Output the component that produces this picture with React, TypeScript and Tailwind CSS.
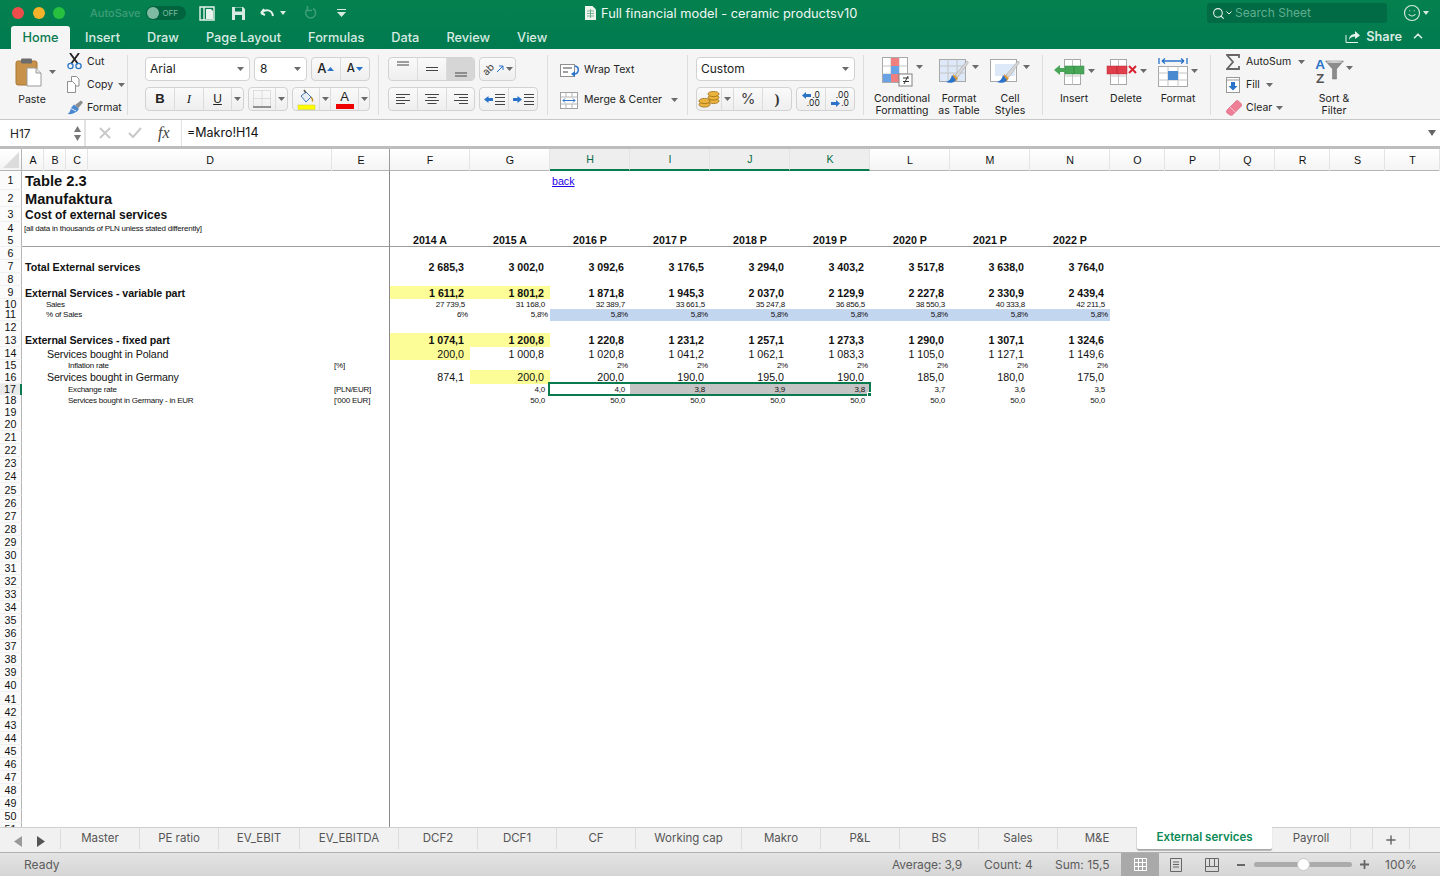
import { ChevronUp, Plus, Search, Smile } from 'lucide-react'
import type { ReactNode } from 'react'

const cols = 'grid grid-cols-[22px_22px_22px_22px_244px_58px_80px_80px_80px_80px_80px_80px_80px_80px_80px_55px_55px_55px_55px_55px_55px]'

const years = ['2014 A', '2015 A', '2016 P', '2017 P', '2018 P', '2019 P', '2020 P', '2021 P', '2022 P']

type Row = {
  n: number
  h: string
  label?: string
  labelCls?: string
  unit?: string
  vals?: string[]
  kind?: 'year' | 'bold' | 'reg' | 'small' | 'pct'
  fills?: Record<number, string>
}

const yellow = 'bg-[#fdfd98]'
const blue = 'bg-[#c3d6f0]'
const gray = 'bg-[#c4c4c4]'

const rows: Row[] = [
  { n: 1, h: 'h-[19px]', label: 'Table 2.3', labelCls: 'pl-[3px] text-[14.67px] font-bold' },
  { n: 2, h: 'h-[17px]', label: 'Manufaktura', labelCls: 'pl-[3px] text-[14.67px] font-bold' },
  { n: 3, h: 'h-[15px]', label: 'Cost of external services', labelCls: 'pl-[3px] text-[12px] font-bold' },
  { n: 4, h: 'h-[12px]', label: '[all data in thousands of PLN unless stated differently]', labelCls: 'pl-[2px] text-[8px] tracking-[-0.23px]' },
  { n: 5, h: 'h-[13px] border-b border-[#a0a0a0]', vals: years, kind: 'year' },
  { n: 6, h: 'h-[13px]' },
  { n: 7, h: 'h-[13px]', label: 'Total External services', labelCls: 'pl-[3px] text-[10.67px] font-bold', kind: 'bold',
    vals: ['2 685,3', '3 002,0', '3 092,6', '3 176,5', '3 294,0', '3 403,2', '3 517,8', '3 638,0', '3 764,0'] },
  { n: 8, h: 'h-[13px]' },
  { n: 9, h: 'h-[13px]', label: 'External Services - variable part', labelCls: 'pl-[3px] text-[10.67px] font-bold tracking-[-0.05px]', kind: 'bold',
    vals: ['1 611,2', '1 801,2', '1 871,8', '1 945,3', '2 037,0', '2 129,9', '2 227,8', '2 330,9', '2 439,4'],
    fills: { 0: yellow, 1: yellow } },
  { n: 10, h: 'h-[10px]', label: 'Sales', labelCls: 'pl-[24px] text-[8px] tracking-[-0.23px]', kind: 'small',
    vals: ['27 739,5', '31 168,0', '32 389,7', '33 661,5', '35 247,8', '36 856,5', '38 550,3', '40 333,8', '42 211,5'] },
  { n: 11, h: 'h-[12px]', label: '% of Sales', labelCls: 'pl-[24px] text-[8px] tracking-[-0.23px]', kind: 'pct',
    vals: ['6%', '5,8%', '5,8%', '5,8%', '5,8%', '5,8%', '5,8%', '5,8%', '5,8%'],
    fills: { 2: blue, 3: blue, 4: blue, 5: blue, 6: blue, 7: blue, 8: blue } },
  { n: 12, h: 'h-[12px]' },
  { n: 13, h: 'h-[14px]', label: 'External Services - fixed part', labelCls: 'pl-[3px] text-[10.67px] font-bold tracking-[-0.05px]', kind: 'bold',
    vals: ['1 074,1', '1 200,8', '1 220,8', '1 231,2', '1 257,1', '1 273,3', '1 290,0', '1 307,1', '1 324,6'],
    fills: { 0: yellow, 1: yellow } },
  { n: 14, h: 'h-[13px]', label: 'Services bought in Poland', labelCls: 'pl-[25px] text-[10.67px] tracking-[-0.1px]', kind: 'reg',
    vals: ['200,0', '1 000,8', '1 020,8', '1 041,2', '1 062,1', '1 083,3', '1 105,0', '1 127,1', '1 149,6'],
    fills: { 0: yellow } },
  { n: 15, h: 'h-[10px]', label: 'Inflation rate', labelCls: 'pl-[46px] text-[8px] tracking-[-0.23px]', unit: '[%]', kind: 'pct',
    vals: ['', '', '2%', '2%', '2%', '2%', '2%', '2%', '2%'] },
  { n: 16, h: 'h-[14px]', label: 'Services bought in Germany', labelCls: 'pl-[25px] text-[10.67px] tracking-[-0.1px]', kind: 'reg',
    vals: ['874,1', '200,0', '200,0', '190,0', '195,0', '190,0', '185,0', '180,0', '175,0'],
    fills: { 1: yellow } },
  { n: 17, h: 'h-[11px]', label: 'Exchange rate', labelCls: 'pl-[46px] text-[8px] tracking-[-0.23px]', unit: '[PLN/EUR]', kind: 'small',
    vals: ['', '4,0', '4,0', '3,8', '3,9', '3,8', '3,7', '3,6', '3,5'],
    fills: { 3: gray, 4: gray, 5: gray } },
  { n: 18, h: 'h-[11px]', label: 'Services bought in Germany - in EUR', labelCls: 'pl-[46px] text-[8px] tracking-[-0.23px]', unit: "['000 EUR]", kind: 'small',
    vals: ['', '50,0', '50,0', '50,0', '50,0', '50,0', '50,0', '50,0', '50,0'] },
  { n: 19, h: 'h-[12px]' },
]
for (let n = 20; n <= 51; n++) rows.push({ n, h: 'h-[13.07px]' })

const valueCls = {
  year: 'justify-center text-[10.67px] font-bold',
  bold: 'justify-end pr-[6px] pt-[1px] text-[10.67px] font-bold',
  reg: 'justify-end pr-[6px] pt-[1px] text-[10.67px]',
  small: 'justify-end pr-[5px] text-[8px] tracking-[-0.23px]',
  pct: 'justify-end pr-[2px] text-[8px] tracking-[-0.23px]',
}

const headers = ['A', 'B', 'C', 'D', 'E', 'F', 'G', 'H', 'I', 'J', 'K', 'L', 'M', 'N', 'O', 'P', 'Q', 'R', 'S', 'T']

const sheets = ['Master', 'PE ratio', 'EV_EBIT', 'EV_EBITDA', 'DCF2', 'DCF1', 'CF', 'Working cap', 'Makro', 'P&L', 'BS', 'Sales', 'M&E']

function Caret({ className = '' }: { className?: string }) {
  return (
    <svg width="7" height="4" viewBox="0 0 7 4" className={className}>
      <path d="M0 0h7L3.5 4z" fill="#6b6b6b" />
    </svg>
  )
}

function Seg({ children, className = '' }: { children: ReactNode; className?: string }) {
  return (
    <div className={`flex h-[24px] rounded-[4px] border border-[#d2d2d2] bg-gradient-to-b from-[#fafafa] to-[#efefef] ${className}`}>
      {children}
    </div>
  )
}

function SegBtn({ children, className = '' }: { children: ReactNode; className?: string }) {
  return <div className={`flex items-center justify-center border-r border-[#dcdcdc] last:border-r-0 ${className}`}>{children}</div>
}

function Sep() {
  return <div className="mt-[6px] h-[60px] w-px shrink-0 bg-[#dedede]" />
}

function Lines({ d }: { d: string }) {
  return (
    <svg width="16" height="14" viewBox="0 0 16 14">
      <path d={d} stroke="#444" strokeWidth="1" fill="none" />
    </svg>
  )
}

function IndentIcon({ flip }: { flip?: boolean }) {
  return (
    <svg width="21" height="13" viewBox="0 0 21 13">
      <path d={flip ? 'M9 6.500L4.500 3v2H0v3h4.500v2z' : 'M0 6.500L4.500 3v2H9v3H4.500v2z'} fill="#2a73c9" />
      <path d="M11 1.500h10M11 4.500h10M11 8.500h10M11 11.500h10" stroke="#444" />
    </svg>
  )
}

function SmallGrid({ children }: { children?: ReactNode }) {
  return (
    <g>
      <rect x="0.5" y="0.5" width="25" height="25" fill="#fff" stroke="#a8a8a8" />
      <path d="M9 .5v25M17 .5v25M.5 9h25M.5 17h25" stroke="#c4c4c4" />
      {children}
    </g>
  )
}

function PasteIcon() {
  return (
    <svg width="28" height="30" viewBox="0 0 28 30">
      <rect x="1" y="4" width="21" height="24" rx="2" fill="#c8924b" stroke="#a87733" />
      <rect x="6" y="1.5" width="11" height="5" rx="1.2" fill="#6d6d6d" />
      <path d="M12 11h9l5 5v13H12z" fill="#fff" stroke="#9a9a9a" />
      <path d="M21 11v5h5" fill="#e8e8e8" stroke="#9a9a9a" />
    </svg>
  )
}

function ScissorsIcon() {
  return (
    <svg width="16" height="17" viewBox="0 0 16 17">
      <path d="M3 0l8 11M12 0L4 11" stroke="#222" strokeWidth="1.8" />
      <circle cx="3.5" cy="13" r="2.6" fill="none" stroke="#2b76c9" strokeWidth="1.3" />
      <circle cx="11.5" cy="13" r="2.6" fill="none" stroke="#2b76c9" strokeWidth="1.3" />
    </svg>
  )
}

function CopyIcon() {
  return (
    <svg width="15" height="17" viewBox="0 0 15 17">
      <path d="M4.5.5h5l2.5 2.5v7H4.5z" fill="#fff" stroke="#8f8f8f" />
      <path d="M.5 5.5h5l3 3v8H.5z" fill="#fff" stroke="#8f8f8f" />
    </svg>
  )
}

function BrushIcon() {
  return (
    <svg width="17" height="15" viewBox="0 0 17 15">
      <path d="M8 5l6-4.5 2 2L11 8.5z" fill="#8d8d8d" />
      <path d="M7 4.5l5 4.5-2 2.5c-3 2-6 3-9.5 2.5 2.5-1.5 3-4 3.5-6z" fill="#4a88d0" />
      <path d="M3 8l6 3" stroke="#d8e6f6" />
    </svg>
  )
}

function FillIcon() {
  return (
    <svg width="19" height="21" viewBox="0 0 19 21">
      <path d="M4 7l5-4 5 5-5 5z" fill="#e9eef5" stroke="#3f78bd" />
      <path d="M7 1l2 3" stroke="#555" strokeWidth="1.5" />
      <path d="M14 8c1.5 1.5 2 3 1.5 4.5" stroke="#b88a2a" strokeWidth="1.5" fill="none" />
      <rect x="1" y="16" width="17" height="4.5" fill="#fdfd00" stroke="#c9c93a" strokeWidth=".5" />
    </svg>
  )
}

function CoinsIcon() {
  return (
    <svg width="22" height="17" viewBox="0 0 22 17">
      <g fill="#e9b33d" stroke="#9a6c14" strokeWidth=".8">
        <ellipse cx="15.5" cy="10" rx="5.5" ry="2.6" />
        <ellipse cx="15.5" cy="6.5" rx="5.5" ry="2.6" />
        <ellipse cx="15.5" cy="3" rx="5.5" ry="2.6" />
        <ellipse cx="6.5" cy="13.5" rx="5.5" ry="2.6" />
        <ellipse cx="6.5" cy="10" rx="5.5" ry="2.6" />
      </g>
    </svg>
  )
}

function ArrowLeft() {
  return (
    <svg width="9" height="7" viewBox="0 0 9 7">
      <path d="M0 3.5L4 0v2h5v3H4v2z" fill="#2a73c9" />
    </svg>
  )
}

function ArrowRight() {
  return (
    <svg width="9" height="7" viewBox="0 0 9 7">
      <path d="M9 3.5L5 0v2H0v3h5v2z" fill="#2a73c9" />
    </svg>
  )
}

function BigItem({ icon, label, className = '' }: { icon: ReactNode; label: ReactNode; className?: string }) {
  return (
    <div className={`flex flex-col items-center ${className}`}>
      <div className="flex h-[36px] items-start gap-[3px]">
        {icon}
      </div>
      <div className="text-center text-[10.5px] leading-[12px] text-[#222]">{label}</div>
    </div>
  )
}

function Ribbon() {
  return (
    <div className="flex h-[70px] shrink-0 bg-[#f5f5f5] font-['Inter',sans-serif] text-[10.5px] text-[#222]">
      {/* clipboard */}
      <div className="flex w-[127px] shrink-0 pl-[15px]">
        <div className="w-[52px] pt-[8px]">
          <div className="flex items-center gap-[6px]">
            <PasteIcon />
            <Caret />
          </div>
          <div className="mt-[5px] w-[34px] text-center">Paste</div>
        </div>
        <div className="flex flex-col gap-[6px] pt-[4px]">
          <div className="flex h-[17px] items-center gap-[4px]"><ScissorsIcon /><span>Cut</span></div>
          <div className="flex h-[17px] items-center gap-[4px]"><CopyIcon /><span className="ml-[1px]">Copy</span><Caret className="ml-[1px]" /></div>
          <div className="flex h-[17px] items-center gap-[3px]"><BrushIcon /><span>Format</span></div>
        </div>
      </div>
      <Sep />

      {/* font */}
      <div className="flex w-[250px] shrink-0 flex-col gap-[6px] pl-[17px] pt-[8px]">
        <div className="flex gap-[4px]">
          <div className="flex h-[24px] w-[105px] items-center justify-between rounded-[4px] border border-[#d2d2d2] bg-white pl-[4px] pr-[5px] text-[12px]">
            <span>Arial</span>
            <Caret />
          </div>
          <div className="flex h-[24px] w-[53px] items-center justify-between rounded-[4px] border border-[#d2d2d2] bg-white pl-[5px] pr-[5px] text-[12px]">
            <span>8</span>
            <Caret />
          </div>
          <Seg className="w-[59px]">
            <SegBtn className="w-[29px] gap-[1px]"><span className="text-[13px] font-medium">A</span><svg width="7" height="4" viewBox="0 0 7 4"><path d="M0 4h7L3.500 0z" fill="#2a73c9" /></svg></SegBtn>
            <SegBtn className="w-[29px] gap-[1px]"><span className="text-[11.500px] font-medium">A</span><svg width="7" height="4" viewBox="0 0 7 4"><path d="M0 0h7L3.500 4z" fill="#2a73c9" /></svg></SegBtn>
          </Seg>
        </div>
        <div className="flex gap-[4px]">
          <Seg className="w-[99px]">
            <SegBtn className="w-[29px] text-[13px] font-bold font-['Liberation_Sans',sans-serif]">B</SegBtn>
            <SegBtn className="w-[29px] text-[13px] italic font-['Liberation_Serif',serif]">I</SegBtn>
            <SegBtn className="w-[28px] text-[12px] underline font-['Liberation_Sans',sans-serif]">U</SegBtn>
            <SegBtn className="flex-1"><Caret /></SegBtn>
          </Seg>
          <Seg className="w-[40px]">
            <SegBtn className="w-[27px]">
              <svg width="18" height="18" viewBox="0 0 18 18">
                <path d="M.5.500h17v16M.5.500v16M9 .5v16M.5 8.500h17" stroke="#c4c4c4" strokeDasharray="1 1" fill="none" />
                <path d="M0 17h18" stroke="#333" />
              </svg>
            </SegBtn>
            <SegBtn className="flex-1"><Caret /></SegBtn>
          </Seg>
          <Seg className="w-[78px]">
            <SegBtn className="w-[27px]"><FillIcon /></SegBtn>
            <SegBtn className="w-[11px]"><Caret /></SegBtn>
            <SegBtn className="w-[28px]">
              <div className="flex flex-col items-center">
                <span className="font-['Liberation_Sans',sans-serif] text-[13px] leading-[14px]">A</span>
                <span className="h-[5px] w-[18px] bg-[#ee0000]" />
              </div>
            </SegBtn>
            <SegBtn className="flex-1"><Caret /></SegBtn>
          </Seg>
        </div>
      </div>
      <Sep />

      {/* alignment */}
      <div className="flex w-[168px] shrink-0 flex-col gap-[6px] pl-[9px] pt-[8px]">
        <div className="flex gap-[4px]">
          <Seg className="w-[87px]">
            <SegBtn className="w-[29px] items-start pt-[1px]"><Lines d="M2 3h12M2 6h12" /></SegBtn>
            <SegBtn className="w-[29px]"><Lines d="M2 5.500h12M2 8.500h12" /></SegBtn>
            <SegBtn className="flex-1 rounded-r-[3px] bg-[#d6d6d6] pt-[6px]"><Lines d="M2 8h12M2 11h12" /></SegBtn>
          </Seg>
          <Seg className="w-[37px] items-center justify-center gap-[2px]">
            <span className="-rotate-45 text-[10px] leading-none text-[#444]">ab</span>
            <svg width="8" height="8" viewBox="0 0 8 8"><path d="M1 7l6-6M3 1h4v4" stroke="#2a73c9" fill="none" /></svg>
            <Caret />
          </Seg>
        </div>
        <div className="flex gap-[4px]">
          <Seg className="w-[87px]">
            <SegBtn className="w-[29px]"><Lines d="M1 2.500h14M1 5.500h9M1 8.500h14M1 11.500h9" /></SegBtn>
            <SegBtn className="w-[29px]"><Lines d="M1 2.500h14M3.500 5.500h9M1 8.500h14M3.500 11.500h9" /></SegBtn>
            <SegBtn className="flex-1"><Lines d="M1 2.500h14M6 5.500h9M1 8.500h14M6 11.500h9" /></SegBtn>
          </Seg>
          <Seg className="w-[59px]">
            <SegBtn className="w-[29px]"><IndentIcon /></SegBtn>
            <SegBtn className="flex-1"><IndentIcon flip /></SegBtn>
          </Seg>
        </div>
      </div>
      <Sep />

      {/* wrap and merge */}
      <div className="flex w-[139px] shrink-0 flex-col gap-[12px] pl-[12px] pt-[12px]">
        <div className="flex h-[18px] items-center gap-[4px]">
          <svg width="20" height="15" viewBox="0 0 20 15">
            <rect x=".5" y="1.500" width="14" height="12" fill="#fff" stroke="#8f8f8f" />
            <path d="M3 5h9M3 9h5" stroke="#444" />
            <path d="M15 3c5 1 4 8-1 8" stroke="#2a73c9" strokeWidth="1.500" fill="none" />
            <path d="M11 11l4-3v6z" fill="#2a73c9" />
          </svg>
          <span>Wrap Text</span>
        </div>
        <div className="flex h-[18px] items-center gap-[6px]">
          <svg width="18" height="17" viewBox="0 0 18 17">
            <rect x=".5" y=".5" width="17" height="16" fill="#fff" stroke="#a0a0a0" />
            <path d="M.5 5h17M.5 12h17M6 .5V5M12 .5V5M6 12v4.500M12 12v4.500" stroke="#b5b5b5" />
            <path d="M3 8.500h12M3 8.500l2-2M3 8.500l2 2M15 8.500l-2-2M15 8.500l-2 2" stroke="#2a73c9" />
          </svg>
          <span>Merge &amp; Center</span>
          <Caret className="ml-[3px]" />
        </div>
      </div>
      <Sep />

      {/* number */}
      <div className="flex w-[175px] shrink-0 flex-col gap-[6px] pl-[8px] pt-[8px]">
        <div className="flex h-[24px] w-[159px] items-center justify-between rounded-[4px] border border-[#d2d2d2] bg-white pl-[4px] pr-[5px] text-[12px]">
          <span>Custom</span>
          <Caret />
        </div>
        <div className="flex gap-[4px]">
          <Seg className="w-[96px]">
            <SegBtn className="w-[25px]"><CoinsIcon /></SegBtn>
            <SegBtn className="w-[12px]"><Caret /></SegBtn>
            <SegBtn className="w-[29px] text-[15px] text-[#444]">%</SegBtn>
            <SegBtn className="flex-1 font-['Liberation_Serif',serif] text-[15px] font-bold leading-none text-[#333]">)</SegBtn>
          </Seg>
          <Seg className="w-[59px]">
            <SegBtn className="w-[29px]">
              <div className="flex flex-col items-end text-[8.500px] leading-[8px]">
                <div className="flex items-center gap-[1px]"><ArrowLeft /><span>.0</span></div>
                <span>.00</span>
              </div>
            </SegBtn>
            <SegBtn className="flex-1">
              <div className="flex flex-col items-end text-[8.500px] leading-[8px]">
                <span>.00</span>
                <div className="flex items-center gap-[1px]"><ArrowRight /><span>.0</span></div>
              </div>
            </SegBtn>
          </Seg>
        </div>
      </div>
      <Sep />

      {/* styles */}
      <div className="flex w-[178px] shrink-0 pl-[6px] pt-[8px]">
        <BigItem className="w-[64px]" label={<>Conditional<br />Formatting</>} icon={
          <>
            <svg width="31" height="30" viewBox="0 0 31 30">
              <SmallGrid />
              <rect x="9" y="1" width="8" height="8" fill="#f08080" />
              <rect x="9" y="9" width="8" height="8" fill="#69a3e5" />
              <rect x="9" y="17" width="8" height="8" fill="#f08080" />
              <rect x="1" y="17" width="8" height="8" fill="#69a3e5" />
              <rect x="17" y="17" width="13" height="12" fill="#fff" stroke="#808080" />
              <path d="M21 21h6M21 24.500h6M26 19l-4 8" stroke="#333" />
            </svg>
            <Caret className="mt-[8px]" />
          </>
        } />
        <BigItem className="w-[50px]" label={<>Format<br />as Table</>} icon={
          <>
            <svg width="30" height="30" viewBox="0 0 30 30">
              <rect x=".5" y="2.500" width="26" height="22" fill="#dde9f8" stroke="#a8a8a8" />
              <path d="M9 2.500v22M18 2.500v22M.5 9h26M.5 16h26" stroke="#c4c4c4" />
              <path d="M16 18L28 4l1.500 1.500L19 20z" fill="#d8d8d8" stroke="#999" strokeWidth=".5" />
              <path d="M14 17l5 4-2 3-4 1z" fill="#d99a3c" />
              <path d="M13 18c-1 4-3 6-6 7 3 1.500 8 1 10-2z" fill="#2a73c9" />
            </svg>
            <Caret className="mt-[8px]" />
          </>
        } />
        <BigItem className="w-[52px]" label={<>Cell<br />Styles</>} icon={
          <>
            <svg width="30" height="30" viewBox="0 0 30 30">
              <rect x=".5" y="2.500" width="26" height="22" fill="#fff" stroke="#a8a8a8" />
              <rect x="5" y="7" width="20" height="12" fill="#dde9f8" />
              <path d="M16 18L28 4l1.500 1.500L19 20z" fill="#d8d8d8" stroke="#999" strokeWidth=".5" />
              <path d="M14 17l5 4-2 3-4 1z" fill="#d99a3c" />
              <path d="M13 18c-1 4-3 6-6 7 3 1.500 8 1 10-2z" fill="#2a73c9" />
            </svg>
            <Caret className="mt-[8px]" />
          </>
        } />
      </div>
      <Sep />

      {/* cells */}
      <div className="flex w-[167px] shrink-0 pl-[5px] pt-[8px]">
        <BigItem className="w-[52px]" label="Insert" icon={
          <>
            <svg width="32" height="26" viewBox="0 0 32 26" className="mt-[2px]">
              <rect x="11.500" y=".5" width="16" height="25" fill="#fff" stroke="#a8a8a8" />
              <path d="M19.500 .5v25M11.500 17h16" stroke="#c4c4c4" />
              <rect x="12" y="7" width="19" height="8" fill="#49a659" stroke="#2f8a42" strokeWidth=".5" />
              <path d="M21 7v8" stroke="#2f8a42" />
              <path d="M1 11l6-5v10z" fill="#49a659" />
              <rect x="6" y="9" width="6" height="4" fill="#49a659" />
            </svg>
            <Caret className="mt-[12px]" />
          </>
        } />
        <BigItem className="w-[52px]" label="Delete" icon={
          <>
            <svg width="31" height="26" viewBox="0 0 31 26" className="mt-[2px]">
              <rect x="4.500" y=".5" width="16" height="25" fill="#fff" stroke="#a8a8a8" />
              <path d="M12.500 .5v25M4.500 17h16" stroke="#c4c4c4" />
              <rect x="1" y="7" width="20" height="8" fill="#df3e4a" stroke="#b92c38" strokeWidth=".5" />
              <path d="M11 7v8" stroke="#b92c38" />
              <path d="M23 7l7 7M30 7l-7 7" stroke="#d8232f" strokeWidth="2" />
            </svg>
            <Caret className="mt-[12px]" />
          </>
        } />
        <BigItem className="w-[52px]" label="Format" icon={
          <>
            <svg width="30" height="30" viewBox="0 0 30 30">
              <path d="M1 1v6M29 1v6M4 4h22M4 4l3-2.500M4 4l3 2.500M26 4l-3-2.500M26 4l-3 2.500" stroke="#2a73c9" strokeWidth="1.300" fill="none" />
              <rect x=".5" y="9.500" width="29" height="20" fill="#fff" stroke="#a8a8a8" />
              <path d="M10 9.500v20M20 9.500v20M.5 16h29M.5 23h29" stroke="#c4c4c4" />
              <rect x="10" y="14" width="10" height="9" fill="#4a88d0" />
            </svg>
            <Caret className="mt-[12px]" />
          </>
        } />
      </div>
      <Sep />

      {/* editing */}
      <div className="flex pl-[15px]">
        <div className="flex w-[84px] flex-col gap-[6px] pt-[4px]">
          <div className="flex h-[17px] items-center gap-[6px]">
            <svg width="14" height="16" viewBox="0 0 14 16">
              <path d="M13 4V1H1l6 7-6 7h12v-3" stroke="#666" strokeWidth="1.800" fill="none" />
            </svg>
            <span>AutoSum</span>
            <Caret className="ml-[1px]" />
          </div>
          <div className="flex h-[17px] items-center gap-[6px]">
            <svg width="14" height="16" viewBox="0 0 14 16">
              <rect x=".5" y=".5" width="13" height="15" fill="#fff" stroke="#999" />
              <path d="M.5 3h13" stroke="#999" />
              <path d="M5 5h4v4h2.500L7 13.500 2.500 9H5z" fill="#2a73c9" />
            </svg>
            <span>Fill</span>
            <Caret />
          </div>
          <div className="flex h-[17px] items-center gap-[4px]">
            <svg width="16" height="16" viewBox="0 0 16 16">
              <path d="M1 10l9-9c1-1 2-.5 3 .5l2 2c1 1 1 2 0 3l-8 8c-1 1-2 1-3 .5L1 13c-.8-1-.8-2 0-3z" fill="#ef7f97" stroke="#d45c77" strokeWidth=".6" />
              <path d="M4 7l6 6" stroke="#f9c2ce" />
            </svg>
            <span>Clear</span>
            <Caret />
          </div>
        </div>
        <div className="flex w-[48px] flex-col items-center pt-[9px]">
          <div className="flex h-[35px] items-start">
            <div className="flex flex-col items-center font-['Liberation_Sans',sans-serif] text-[13.500px] font-bold leading-[14px]">
              <span className="text-[#2a73c9]">A</span>
              <span className="text-[#555]">Z</span>
            </div>
            <svg width="19" height="20" viewBox="0 0 19 20" className="mt-[2px]">
              <path d="M.5 1h18l-7 8v10h-4V9z" fill="#8c8c8c" stroke="#6f6f6f" strokeWidth=".5" />
              <ellipse cx="9.500" cy="2" rx="8" ry="1" fill="#d0d0d0" />
            </svg>
            <Caret className="ml-[2px] mt-[8px]" />
          </div>
          <div className="text-center leading-[12px]">Sort &amp;<br />Filter</div>
        </div>
      </div>
    </div>
  )
}

function TitleBar() {
  return (
    <div className="shrink-0 bg-gradient-to-b from-[#05814f] to-[#007a4f] font-['Inter',sans-serif]">
      <div className="flex h-[26px] items-center">
        <div className="flex w-[585px] shrink-0 items-center">
          <div className="ml-[12px] flex gap-[8.500px]">
            <span className="h-[12px] w-[12px] rounded-full bg-[#ee4d4b]" />
            <span className="h-[12px] w-[12px] rounded-full bg-[#f6b22a]" />
            <span className="h-[12px] w-[12px] rounded-full bg-[#27c13f]" />
          </div>
          <span className="ml-[25px] text-[11px] font-medium text-[#3f9d79]">AutoSave</span>
          <div className="ml-[6px] flex h-[14px] w-[40px] items-center rounded-full bg-[#02643f] pl-[1px]">
            <span className="h-[12px] w-[12px] rounded-full bg-[#7fbba3]" />
            <span className="ml-[3px] text-[8px] text-[#7fbba3]">OFF</span>
          </div>
          <svg width="16" height="15" viewBox="0 0 16 15" className="ml-[13px]">
            <path d="M1 1h14v13H1zM5 1v13" fill="none" stroke="#e6f2ec" strokeWidth="1.400" />
            <path d="M7 3h5l2 2v8H7z" fill="#e6f2ec" />
          </svg>
          <svg width="15" height="15" viewBox="0 0 15 15" className="ml-[16px]">
            <path d="M1 1h11l2 2v11H1z" fill="#d8ebe2" />
            <rect x="4" y="1.500" width="7" height="4" fill="#007a4f" />
            <rect x="4" y="9" width="7" height="5" fill="#007a4f" />
          </svg>
          <svg width="16" height="12" viewBox="0 0 16 12" className="ml-[13px]">
            <path d="M2 6l3-4M2 6l4 2M2.500 6C6 2 13 2 14 9" stroke="#e6f2ec" strokeWidth="2" fill="none" />
          </svg>
          <svg width="6" height="4" viewBox="0 0 6 4" className="ml-[5px]"><path d="M0 0h6L3 4z" fill="#d8ebe2" /></svg>
          <svg width="13" height="14" viewBox="0 0 13 14" className="ml-[18px]">
            <path d="M9 2.500A5 5 0 1 1 3.500 3M3.500 0v4.500H8" stroke="#3f9d79" strokeWidth="1.500" fill="none" />
          </svg>
          <svg width="9" height="8" viewBox="0 0 9 8" className="ml-[20px]">
            <path d="M0 .5h9" stroke="#d8ebe2" />
            <path d="M0 3h9L4.500 8z" fill="#d8ebe2" />
          </svg>
        </div>
        <div className="flex w-[622px] shrink-0 items-center pt-[1px] text-[12.850px] text-[#f0f8f4]">
          <svg width="11" height="14" viewBox="0 0 11 14" className="mr-[5px]">
            <path d="M0 0h7.500L11 3.500V14H0z" fill="#eef3ee" />
            <path d="M2 5h7M2 7.500h7M2 10h7M5.500 3v9" stroke="#5aa37e" strokeWidth=".8" />
          </svg>
          <span>Full financial model - ceramic productsv10</span>
        </div>
        <div className="flex h-[20px] w-[180px] shrink-0 items-center rounded-[3px] bg-[#016b45] pl-[5px] text-[12px] text-[#5fae8f]">
          <Search size={13} className="text-[#e6f2ec]" />
          <svg width="6" height="4" viewBox="0 0 6 4" className="ml-[1px]"><path d="M.5.500L3 3l2.500-2.500" stroke="#e6f2ec" fill="none" /></svg>
          <span className="ml-[3px]">Search Sheet</span>
        </div>
        <Smile size={18} strokeWidth={1.500} className="ml-[16px] text-[#d8ebe2]" />
        <svg width="6" height="4" viewBox="0 0 6 4" className="ml-[2px]"><path d="M0 0h6L3 4z" fill="#d8ebe2" /></svg>
      </div>
      <div className="flex h-[23px] items-end justify-between text-[12.750px] font-medium text-[#d8ebe2]">
        <div className="ml-[11px] flex items-center gap-[27px]">
          <div className="flex h-[23px] w-[59px] items-center justify-center rounded-t-[3px] bg-[#f5f5f5] text-[#0a7a4f]">Home</div>
          <span className="-ml-[12px]">Insert</span>
          <span>Draw</span>
          <span>Page Layout</span>
          <span>Formulas</span>
          <span>Data</span>
          <span>Review</span>
          <span>View</span>
        </div>
        <div className="mb-[3px] mr-[15px] flex items-center">
          <svg width="15" height="13" viewBox="0 0 15 13">
            <path d="M1 5v7.500h12" stroke="#e6f2ec" fill="none" />
            <path d="M4 10c0-4 3-6 6-6V1l5 4.500L10 9V6.500C7 6.500 5 8 4 10z" fill="#e6f2ec" />
          </svg>
          <span className="ml-[6px] font-semibold">Share</span>
          <ChevronUp size={14} strokeWidth={3} className="ml-[9px]" />
        </div>
      </div>
    </div>
  )
}

function FormulaBar() {
  return (
    <div className="flex h-[30px] shrink-0 border-t border-[#c8c8c8] border-b-[3px] border-b-[#bdbdbd] bg-white font-['Inter',sans-serif]">
      <div className="flex w-[86px] shrink-0 items-center justify-between border-r-[2px] border-[#e2e2e2] pl-[10px] pr-[3px] pt-[1px] text-[12px] text-[#222]">
        <span>H17</span>
        <div className="flex flex-col gap-[3px]">
          <svg width="7" height="6" viewBox="0 0 7 6"><path d="M0 6h7L3.500 0z" fill="#777" /></svg>
          <svg width="7" height="6" viewBox="0 0 7 6"><path d="M0 0h7L3.500 6z" fill="#777" /></svg>
        </div>
      </div>
      <div className="flex w-[95px] shrink-0 items-center pl-[13px]">
        <svg width="12" height="12" viewBox="0 0 12 12"><path d="M1 1l10 10M11 1L1 11" stroke="#c9c9c9" strokeWidth="2" /></svg>
        <svg width="14" height="12" viewBox="0 0 14 12" className="ml-[17px]"><path d="M1 6l4 4 8-9" stroke="#c9c9c9" strokeWidth="2" fill="none" /></svg>
        <span className="ml-[16px] font-['Liberation_Serif',serif] text-[16px] italic text-[#444]">fx</span>
      </div>
      <div className="flex flex-1 items-center border-l border-[#e2e2e2] pl-[5px] pt-[1px] text-[12.500px] text-[#111]">=Makro!H14</div>
      <svg width="8" height="6" viewBox="0 0 8 6" className="mr-[4px] mt-[10px]"><path d="M0 0h8L4 6z" fill="#666" /></svg>
    </div>
  )
}

function Sheet() {
  return (
    <div className="min-h-0 flex-1 overflow-hidden bg-white font-['Liberation_Sans',sans-serif] text-[#111]">
      <div className={`${cols} h-[22px] border-b border-[#b5b5b5] bg-gradient-to-b from-white to-[#f4f4f4] text-[10.67px]`}>
        <div className="relative border-r border-[#b5b5b5] overflow-hidden">
          <svg width="21" height="21" viewBox="0 0 21 21"><path d="M19 3v16H3z" fill="#dcdcdc" /></svg>
        </div>
        {headers.map(h => {
          const on = ['H', 'I', 'J', 'K'].includes(h)
          return (
            <div
              key={h}
              className={`flex items-center justify-center border-r pl-[1px] ${
                h === 'E' ? 'border-[#9a9a9a]' : 'border-[#e4e4e4]'
              } ${on ? 'h-[22px] border-b-[2px] border-b-[#0a7a4f] bg-[#eeeeee] text-[#0a6b47]' : ''}`}
            >
              {h}
            </div>
          )
        })}
      </div>
      <div className="relative">
        {rows.map(r => {
          const nudge = r.kind === 'small' || r.kind === 'pct' ? '' : 'pt-[1px]'
          return (
            <div key={r.n} className={`${cols} ${r.h}`}>
              <div
                className={`flex items-center justify-center border-r border-b border-b-[#f0f0f0] text-[10.67px] leading-none ${nudge} ${
                  r.n === 17 ? 'border-r-[2px] border-r-[#0a7a4f] bg-[#eaeaea]' : 'border-r-[#b5b5b5] bg-[#fbfbfb]'
                }`}
              >
                {r.n}
              </div>
              <div className={`col-span-4 flex items-center whitespace-nowrap leading-none ${nudge} ${r.labelCls ?? ''}`}>{r.label}</div>
              <div className="flex items-center whitespace-nowrap border-r border-[#8c8c8c] pl-[2px] text-[8px] leading-none tracking-[-0.23px]">
                {r.unit}
              </div>
              {r.vals?.map((v, i) => (
                <div
                  key={i}
                  className={`flex items-center whitespace-nowrap leading-none ${valueCls[r.kind ?? 'reg']} ${r.fills?.[i] ?? ''}`}
                >
                  {v}
                </div>
              ))}
              {r.n === 1 && (
                <>
                  <div />
                  <div />
                  <div className="flex items-center pl-[2px] pt-[1px] text-[10.67px] leading-none text-[#1f00e6] underline">back</div>
                </>
              )}
            </div>
          )
        })}
        {/* current selection H17:K17 */}
        <div className="absolute left-[548px] top-[211px] h-[14px] w-[323px] border-2 border-[#0a7a4f]" />
        <div className="absolute left-[867px] top-[221px] h-[5px] w-[5px] border border-white bg-[#0a7a4f]" />
      </div>
    </div>
  )
}

function SheetTabs() {
  return (
    <div className="flex h-[26px] shrink-0 border-t border-[#cfcfcf] border-b border-b-[#b0b0b0] bg-[#f1f1f1] font-['Inter',sans-serif] text-[11.500px] text-[#555]">
      <div className="my-[1px] mb-[3px] flex w-[61px] shrink-0 items-center gap-[15px] border-r border-[#dcdcdc] pl-[14px] pt-[4px]">
        <svg width="8" height="11" viewBox="0 0 8 11"><path d="M8 0v11L0 5.500z" fill="#9a9a9a" /></svg>
        <svg width="8" height="11" viewBox="0 0 8 11"><path d="M0 0v11l8-5.500z" fill="#555" /></svg>
      </div>
      {sheets.map(s => (
        <div
          key={s}
          className={`mb-[3px] flex items-center justify-center border-r border-[#dcdcdc] ${s === 'Working cap' ? 'w-[106px]' : 'w-[79px]'} ${
            s === 'EV_EBIT' ? 'w-[81px]' : ''
          } ${s === 'EV_EBITDA' ? 'w-[99px]' : ''}`}
        >
          {s}
        </div>
      ))}
      <div className="-mt-[1px] flex h-[23px] w-[135px] items-center justify-center rounded-b-[2px] border-b border-[#a8a8a8] bg-white font-semibold text-[#0a8a56] shadow-[0_1px_1px_rgba(0,0,0,0.25)]">
        External services
      </div>
      <div className="mb-[3px] flex w-[79px] items-center justify-center border-r border-[#dcdcdc]">Payroll</div>
      <div className="mb-[3px] ml-[21px] flex w-[38px] items-center justify-center border-x border-[#dcdcdc] pt-[3px]">
        <Plus size={14} strokeWidth={2.500} className="text-[#666]" />
      </div>
    </div>
  )
}

function StatusBar() {
  return (
    <div className="flex h-[23px] shrink-0 items-center bg-gradient-to-b from-[#e4e4e4] to-[#d5d5d5] font-['Inter',sans-serif] text-[12px] text-[#5c5c5c]">
      <span className="ml-[24px] w-[868px]">Ready</span>
      <span className="w-[92px] tracking-[-0.1px]">Average: 3,9</span>
      <span className="w-[71px]">Count: 4</span>
      <span className="w-[66px]">Sum: 15,5</span>
      <div className="flex h-[23px] w-[38px] items-center justify-center bg-[#a9a9a9]">
        <svg width="13" height="13" viewBox="0 0 13 13"><path d="M.5.500h12v12H.5zM4.500.5v12M8.500.5v12M.5 4.500h12M.5 8.500h12" stroke="#fff" fill="none" /></svg>
      </div>
      <svg width="14" height="14" viewBox="0 0 14 14" className="ml-[10px]"><path d="M1.500.500h11v13h-11zM4 4h6M4 6.500h6M4 9h6" stroke="#666" fill="none" /></svg>
      <svg width="14" height="14" viewBox="0 0 14 14" className="ml-[22px]"><path d="M.5.500h13v13H.5zM.5 8.500h13M4.500.5v8M9.500.5v8" stroke="#666" fill="none" /></svg>
      <span className="ml-[18px] h-[2px] w-[8px] bg-[#666]" />
      <div className="ml-[9px] flex h-[5px] w-[98px] items-center rounded-full bg-[#ababab]">
        <span className="ml-[43px] h-[13px] w-[13px] rounded-full border border-[#c8c8c8] bg-white" />
      </div>
      <svg width="9" height="9" viewBox="0 0 9 9" className="ml-[8px]"><path d="M0 4.500h9M4.500 0v9" stroke="#666" strokeWidth="1.800" /></svg>
      <span className="ml-[16px]">100%</span>
    </div>
  )
}

export default function App() {
  return (
    <div className="flex h-[876px] w-[1440px] flex-col overflow-hidden bg-white">
      <TitleBar />
      <Ribbon />
      <FormulaBar />
      <Sheet />
      <SheetTabs />
      <StatusBar />
    </div>
  )
}
